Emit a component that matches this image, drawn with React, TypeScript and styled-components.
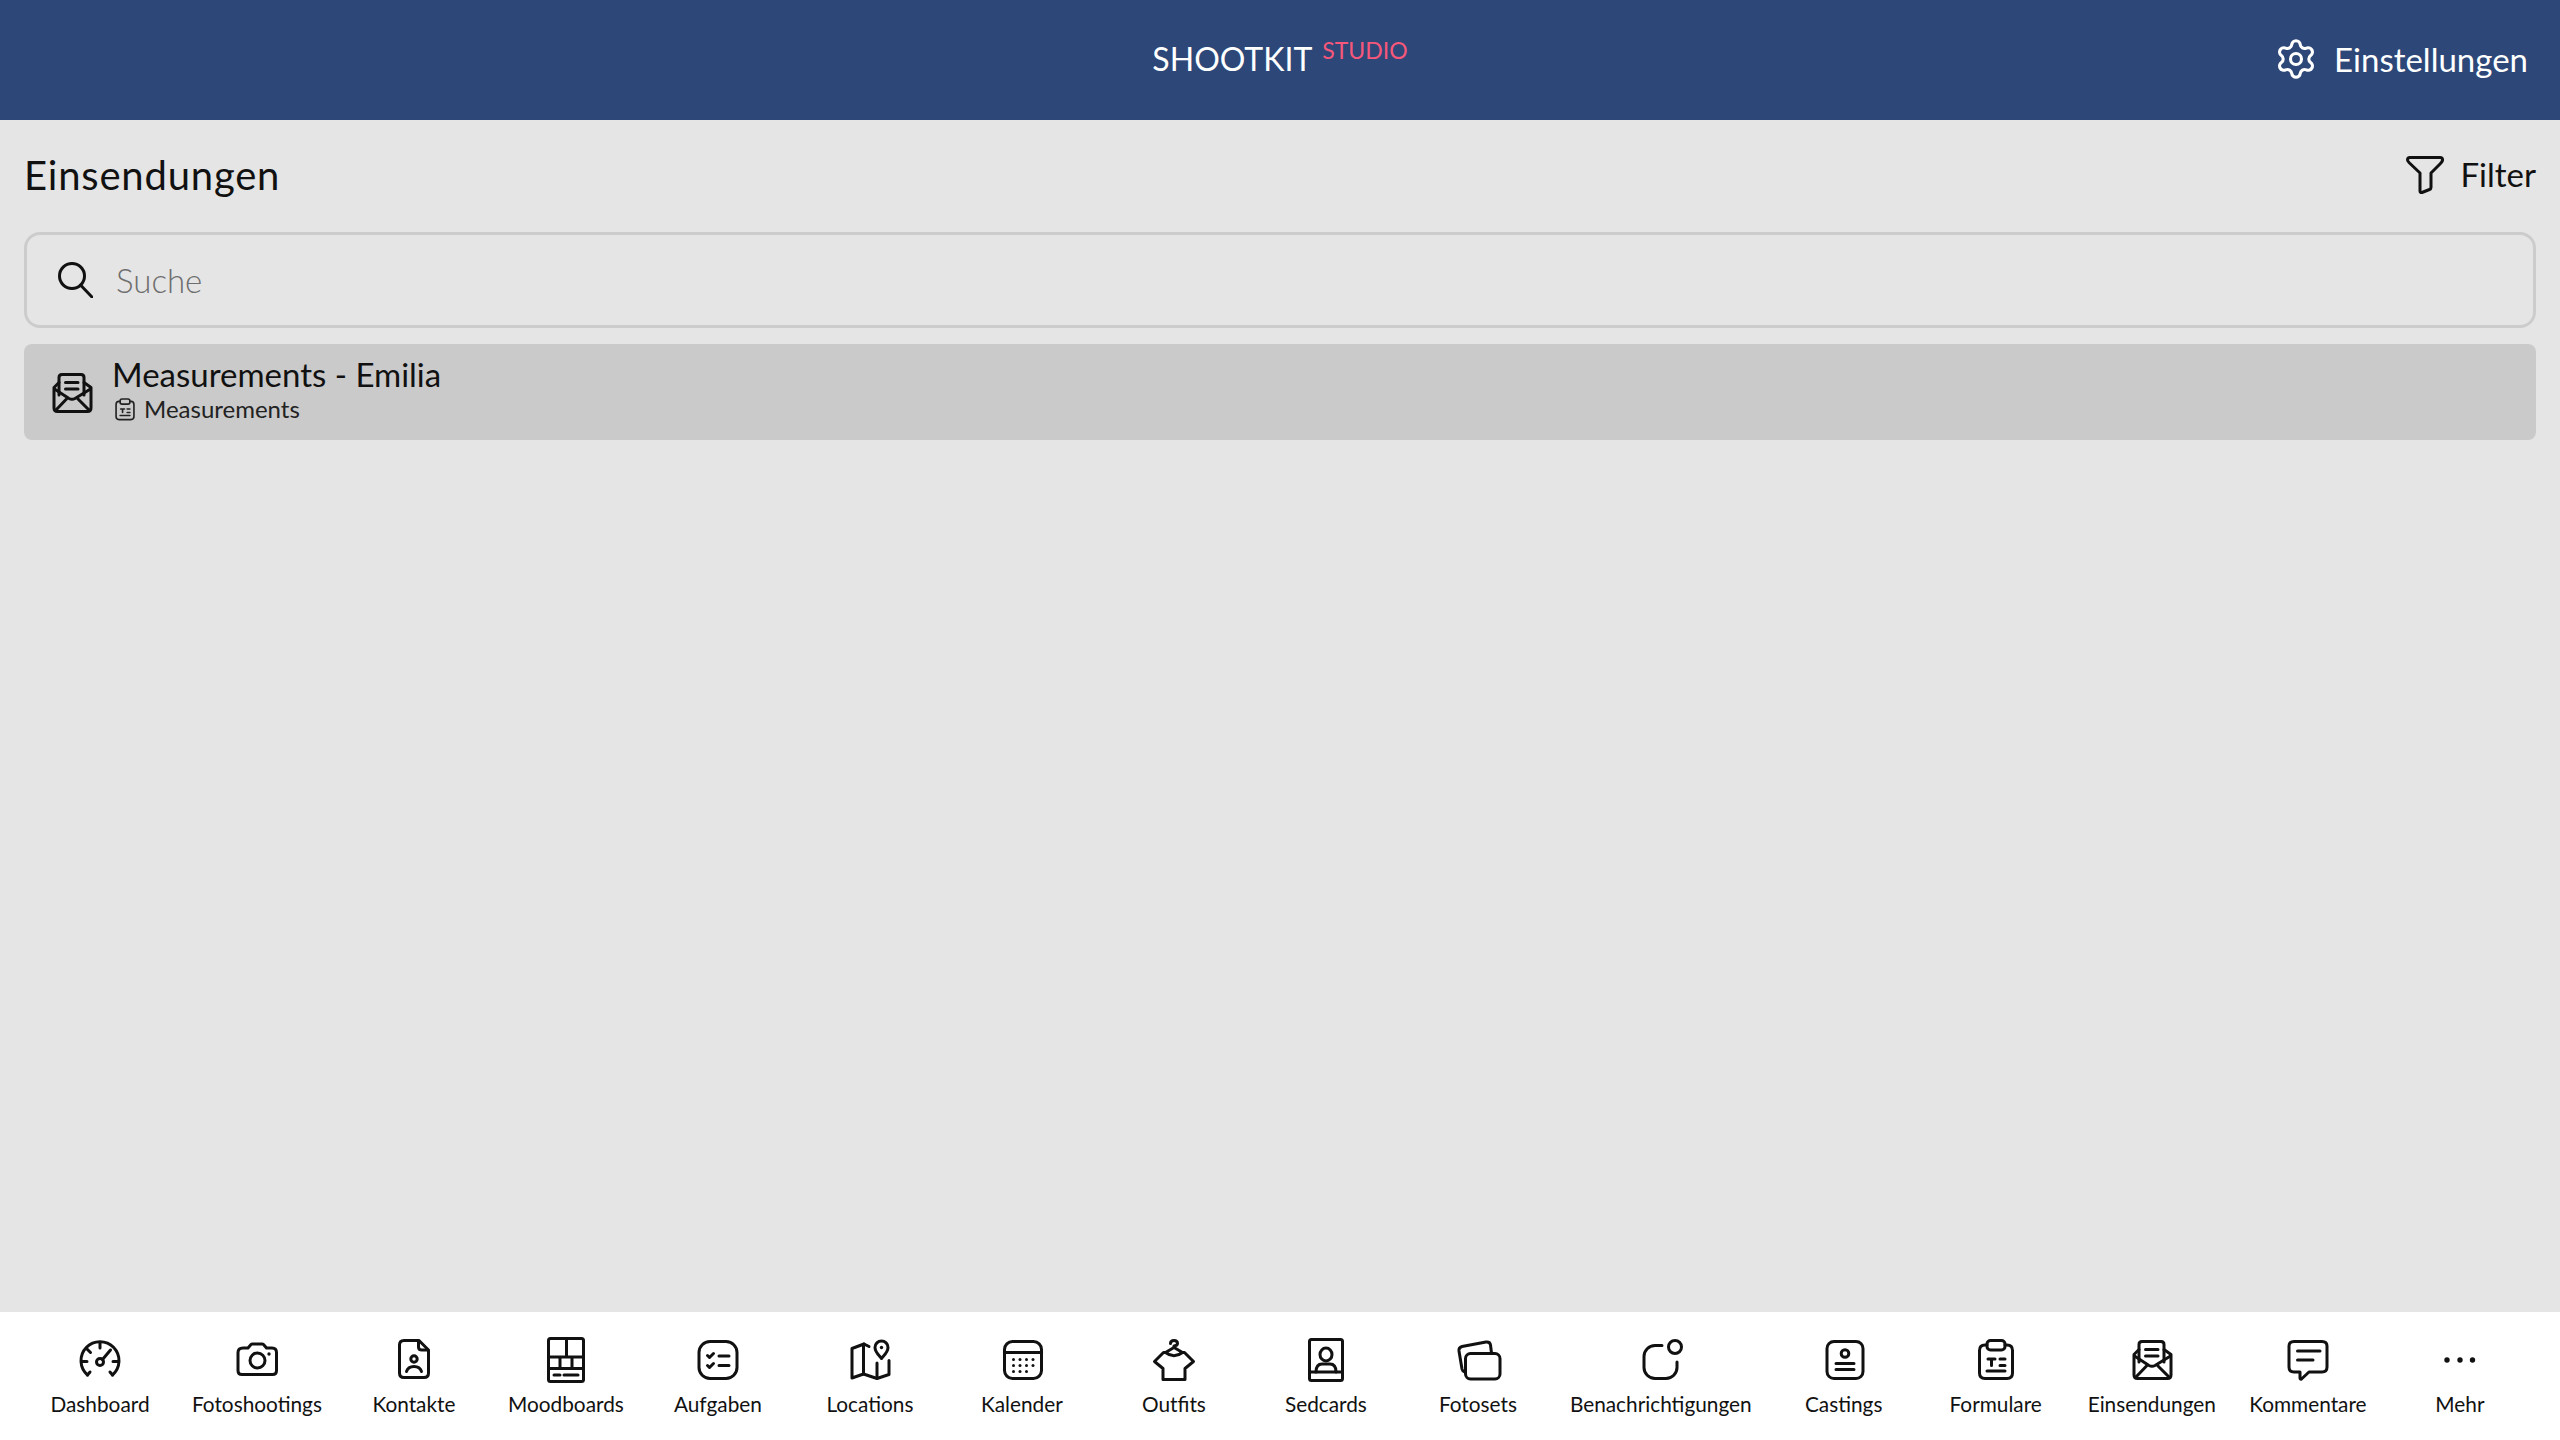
import React from "react"
import styled, { createGlobalStyle } from "styled-components"
import { Settings } from "lucide-react"

const Colors = {
    Navy: "#2c4778",
    Page: "#e5e5e5",
    Row: "#cacaca",
    Border: "#cccccc",
    Pink: "#f7577a",
    Ink: "#111111",
}

const GlobalStyle = createGlobalStyle`
    html, body {
        margin: 0;
        padding: 0;
        background: ${Colors.Page};
        font-family: "Lato", "Open Sans", sans-serif;
        color: ${Colors.Ink};
    }
    * {
        box-sizing: border-box;
    }
`

const Dots = ({ points, r = 2 }: { points: number[][]; r?: number }) => (
    <>
        {points.map(([cx, cy]) => (
            <circle key={`${cx}-${cy}`} cx={cx} cy={cy} r={r} fill="currentColor" stroke="none" />
        ))}
    </>
)

const icons = {
    dashboard: (
        <>
            <path d="M11.500 40 L14 37 M36.500 40 L34 37" />
            <path d="M11.500 40 A19 19 0 1 1 36.500 40" />
            <path d="M24 7.500v5.500M5.500 26.500h5.500M37 26.500h5.500M11 14l3.500 3.500" />
            <circle cx="24" cy="27" r="3.500" />
            <path d="M26.500 24.500 L34.500 15" />
        </>
    ),
    camera: (
        <>
            <path d="M10 13 H15 L18 9.500 Q18.500 9 19.500 9 H29 Q30 9 30.500 9.500 L33.500 13 H39 Q43.500 13 43.500 17.500 V35.500 Q43.500 39.500 39.500 39.500 H9 Q5 39.500 5 35.500 V17.500 Q5 13 10 13 Z" />
            <circle cx="24.500" cy="25.500" r="7.500" />
            <Dots points={[[36, 19]]} r={1.7} />
        </>
    ),
    contact: (
        <>
            <path d="M14 5.500 H29 L38.500 15 V38 Q38.500 42.500 34 42.500 H14 Q9.500 42.500 9.500 38 V10 Q9.500 5.500 14 5.500 Z" />
            <path d="M28.500 6 V12 Q28.500 15 32 15 H38" />
            <circle cx="24" cy="24" r="3.200" />
            <path d="M16.500 36.500 Q18 31.500 24 31.500 Q30 31.500 31.500 36.500" />
        </>
    ),
    moodboard: (
        <>
            <rect x="6.500" y="3.500" width="35" height="43" rx="2" />
            <path d="M6.500 22 H41.500 M6.500 33.500 H41.500 M24.500 3.500 V22 M18 22 V33.500 M30 22 V33.500" />
            <path d="M12 40 H18 M22 40 H36" />
        </>
    ),
    task: (
        <>
            <rect x="5" y="6.500" width="38" height="37" rx="11" />
            <path d="M13.500 20.500 L15.500 22.500 L19.500 18.500 M13.500 30.500 L15.500 32.500 L19.500 28.500 M25 21 H35 M25 30.500 H35" />
        </>
    ),
    location: (
        <>
            <path d="M18 9 L6 13.500 V43 L17.500 39 L31 43.500 L43 39.500 V25.500" />
            <path d="M17.500 9.500 V39 M31 28 V43 M18 9 L23 11.500" />
            <path d="M35.500 23.500 C33 20.500 29 17 29 12.500 A6.500 6.500 0 0 1 42 12.500 C42 17 38 20.500 35.500 23.500 Z" />
            <Dots points={[[35.500, 12.500]]} r={1.700} />
        </>
    ),
    calendar: (
        <>
            <rect x="6.500" y="6.500" width="37" height="37" rx="8" />
            <path d="M6.500 17.500 H43.500" />
            <Dots
                points={[
                    [15.500, 24.500],
                    [22, 24.500],
                    [28.500, 24.500],
                    [35, 24.500],
                    [15.500, 30.500],
                    [22, 30.500],
                    [28.500, 30.500],
                    [35, 30.500],
                    [15.500, 36.500],
                    [22, 36.500],
                    [28.500, 36.500],
                ]}
                r={1.500}
            />
        </>
    ),
    outfit: (
        <>
            <path d="M15.500 17.500 H13.500 L4.500 26.500 L13 33.500 V44.500 H35 V33.500 L43.500 26.500 L34.500 17.500 H32.500" />
            <path d="M15.500 17.500 L24 12.500 L32.500 17.500 Q24 24 15.500 17.500 Z" />
            <path d="M20.500 8.500 Q20.500 5.500 24 5.500 Q27.500 5.500 27.500 8.500 Q27.500 10.500 24 11 V12.500" />
        </>
    ),
    sedcard: (
        <>
            <rect x="7.500" y="4.500" width="33" height="41" rx="2" />
            <path d="M7.500 37 H40.500" />
            <ellipse cx="24" cy="19.500" rx="6" ry="6.500" />
            <path d="M14 37 Q14 29 20 29 H28 Q34 29 34 37" />
        </>
    ),
    photoset: (
        <>
            <rect x="11.500" y="18.500" width="34.500" height="25.500" rx="5" />
            <path d="M11.500 37 L10 36.500 Q8.500 36 8 34 L5 16 Q4.500 12.500 8 11.500 L32 7 Q36 6.500 36.500 10 L37.500 18" />
        </>
    ),
    notification: (
        <>
            <path d="M25 10.500 H18 A11 11 0 0 0 7 21.500 V32.500 A11 11 0 0 0 18 43.500 H29 A11 11 0 0 0 40 32.500 V27" />
            <circle cx="38" cy="12" r="6.500" />
        </>
    ),
    casting: (
        <>
            <rect x="7" y="6.500" width="36" height="37" rx="7" />
            <circle cx="25" cy="18.500" r="3.800" />
            <path d="M16 28.500 H34 M16 34.500 H34" />
        </>
    ),
    form: (
        <>
            <path d="M15 10 H13 Q7.500 10 7.500 15.500 V38 Q7.500 43.500 13 43.500 H35 Q40.500 43.500 40.500 38 V15.500 Q40.500 10 35 10 H33" />
            <rect x="15" y="5.500" width="18" height="9.500" rx="3.500" />
            <path d="M16 24 H23 M19.500 24 V30.500 M28 24 H33 M28 30.500 H33 M15 36 H33" />
        </>
    ),
    submission: (
        <>
            <path d="M11 27 V9.500 Q11 6.500 14 6.500 H33 Q36 6.500 36 9.500 V27" />
            <path d="M17.500 14.500 H30 M17.500 21 H30" />
            <path d="M11 14.500 L6 19.500 V40 Q6 43.500 9.500 43.500 H39.500 Q43 43.500 43 40 V19.500 L36 14.500" />
            <path d="M6.500 21 L21 30.500 Q24 32 27 30.500 L42.500 21 M7.500 42.500 L18.500 31 M41.500 42.500 L30 31" />
        </>
    ),
    comment: (
        <>
            <path d="M10 6.500 H38 Q43 6.500 43 11 V32 Q43 37 38 37 H25 L17.500 44 Q16 44.500 16 43 V37 H10 Q5 37 5 32 V11 Q5 6.500 10 6.500 Z" />
            <path d="M13.500 16 H36 M13.500 25 H29" />
        </>
    ),
    more: (
        <Dots
            points={[
                [11, 25],
                [24, 25],
                [36.500, 25],
            ]}
            r={2.700}
        />
    ),
}

type IconName = keyof typeof icons

const tabs: { label: string; icon: IconName }[] = [
    { label: "Dashboard", icon: "dashboard" },
    { label: "Fotoshootings", icon: "camera" },
    { label: "Kontakte", icon: "contact" },
    { label: "Moodboards", icon: "moodboard" },
    { label: "Aufgaben", icon: "task" },
    { label: "Locations", icon: "location" },
    { label: "Kalender", icon: "calendar" },
    { label: "Outfits", icon: "outfit" },
    { label: "Sedcards", icon: "sedcard" },
    { label: "Fotosets", icon: "photoset" },
    { label: "Benachrichtigungen", icon: "notification" },
    { label: "Castings", icon: "casting" },
    { label: "Formulare", icon: "form" },
    { label: "Einsendungen", icon: "submission" },
    { label: "Kommentare", icon: "comment" },
    { label: "Mehr", icon: "more" },
]

function Icon({ name, size = 48 }: { name: IconName; size?: number }) {
    return (
        <Glyph viewBox="0 0 48 48" $size={size}>
            {icons[name]}
        </Glyph>
    )
}

function App() {
    return (
        <>
            <GlobalStyle />
            <Page>
                <Header>
                    <span />
                    <Brand>
                        SHOOTKIT<BrandSub>STUDIO</BrandSub>
                    </Brand>
                    <HeaderAction>
                        <Settings size={44} strokeWidth={1.7} />
                        Einstellungen
                    </HeaderAction>
                </Header>

                <Main>
                    <TitleRow>
                        <Title>Einsendungen</Title>
                        <FilterButton>
                            <Glyph viewBox="0 0 48 48" $size={48}>
                                <path d="M9 6.500 H39 Q42 6.500 41.500 9.500 Q41 11 39 13 L30 22 V36.500 Q30 38 28.500 38.500 L21 41.500 Q19 42 19 40 V22 L8.500 12 Q6.500 10 6.500 9 Q6.500 6.500 9 6.500 Z" />
                            </Glyph>
                            <FilterLabel>Filter</FilterLabel>
                        </FilterButton>
                    </TitleRow>

                    <SearchBox>
                        <SearchIcon viewBox="0 0 36 36">
                            <circle cx="15" cy="14" r="12.500" />
                            <path d="M23.500 23 L35 35" />
                        </SearchIcon>
                        <SearchInput placeholder="Suche" readOnly />
                    </SearchBox>

                    <ListItem>
                        <Icon name="submission" />
                        <ItemText>
                            <ItemTitle>Measurements - Emilia</ItemTitle>
                            <ItemSub>
                                <Icon name="form" size={26} />
                                Measurements
                            </ItemSub>
                        </ItemText>
                    </ListItem>
                </Main>

                <TabBar>
                    {tabs.map((tab) => (
                        <Tab key={tab.label}>
                            <Icon name={tab.icon} />
                            <TabLabel>{tab.label}</TabLabel>
                        </Tab>
                    ))}
                </TabBar>
            </Page>
        </>
    )
}

export default App

const Page = styled.div`
    width: 100%;
    height: 100vh;
    display: flex;
    flex-direction: column;
    overflow: hidden;
`

const Glyph = styled.svg<{ $size: number }>`
    width: ${(p) => p.$size}px;
    height: ${(p) => p.$size}px;
    flex-shrink: 0;
    fill: none;
    stroke: currentColor;
    stroke-width: 3;
    stroke-linecap: round;
    stroke-linejoin: round;
`

const Header = styled.header`
    height: 120px;
    flex-shrink: 0;
    display: grid;
    grid-template-columns: 1fr auto 1fr;
    align-items: center;
    padding: 0 32px 3px;
    background: ${Colors.Navy};
    color: #ffffff;
`

const Brand = styled.div`
    display: flex;
    align-items: flex-start;
    font-size: 32px;
    line-height: 40px;
`

const BrandSub = styled.span`
    margin: -9px 0 0 10px;
    font-size: 23px;
    line-height: 40px;
    color: ${Colors.Pink};
`

const HeaderAction = styled.div`
    justify-self: end;
    display: flex;
    align-items: center;
    gap: 16px;
    font-size: 33px;
`

const Main = styled.main`
    flex: 1;
    padding: 0 24px;
    background: ${Colors.Page};
`

const TitleRow = styled.div`
    height: 112px;
    display: flex;
    align-items: center;
    justify-content: space-between;
    padding-bottom: 2px;
`

const Title = styled.h1`
    margin: 0;
    font-size: 40px;
    font-weight: 400;
    letter-spacing: 0.8px;
`

const FilterButton = styled.div`
    display: flex;
    align-items: center;
    gap: 12px;
    font-size: 33px;
`

const FilterLabel = styled.span`
    padding-bottom: 2px;
`

const SearchBox = styled.div`
    height: 96px;
    display: flex;
    align-items: center;
    gap: 23px;
    padding: 0 30px;
    border: 3px solid ${Colors.Border};
    border-radius: 16px;
`

const SearchIcon = styled.svg`
    width: 36px;
    height: 36px;
    flex-shrink: 0;
    fill: none;
    stroke: ${Colors.Ink};
    stroke-width: 3;
    stroke-linecap: round;
`

const SearchInput = styled.input`
    flex: 1;
    border: none;
    outline: none;
    background: transparent;
    font-family: inherit;
    font-size: 33px;
    font-weight: 300;
    padding: 0;

    &::placeholder {
        color: #6e6e6e;
        opacity: 1;
    }
`

const ListItem = styled.div`
    height: 96px;
    margin-top: 16px;
    display: flex;
    align-items: center;
    gap: 16px;
    padding-left: 24px;
    background: ${Colors.Row};
    border-radius: 8px;
`

const ItemText = styled.div`
    display: flex;
    flex-direction: column;
    padding-bottom: 6px;
`

const ItemTitle = styled.div`
    font-size: 33px;
    line-height: 40px;
`

const ItemSub = styled.div`
    display: flex;
    align-items: center;
    gap: 6px;
    font-size: 24px;
    line-height: 30px;
    color: #222222;
`

const TabBar = styled.nav`
    height: 128px;
    flex-shrink: 0;
    display: flex;
    justify-content: space-between;
    padding: 23px 24px 0;
    background: #ffffff;
`

const Tab = styled.div`
    min-width: 152px;
    padding: 0 16px;
    display: flex;
    flex-direction: column;
    align-items: center;
    gap: 8px;
`

const TabLabel = styled.span`
    font-size: 20.8px;
    line-height: 26px;
    white-space: nowrap;
`
